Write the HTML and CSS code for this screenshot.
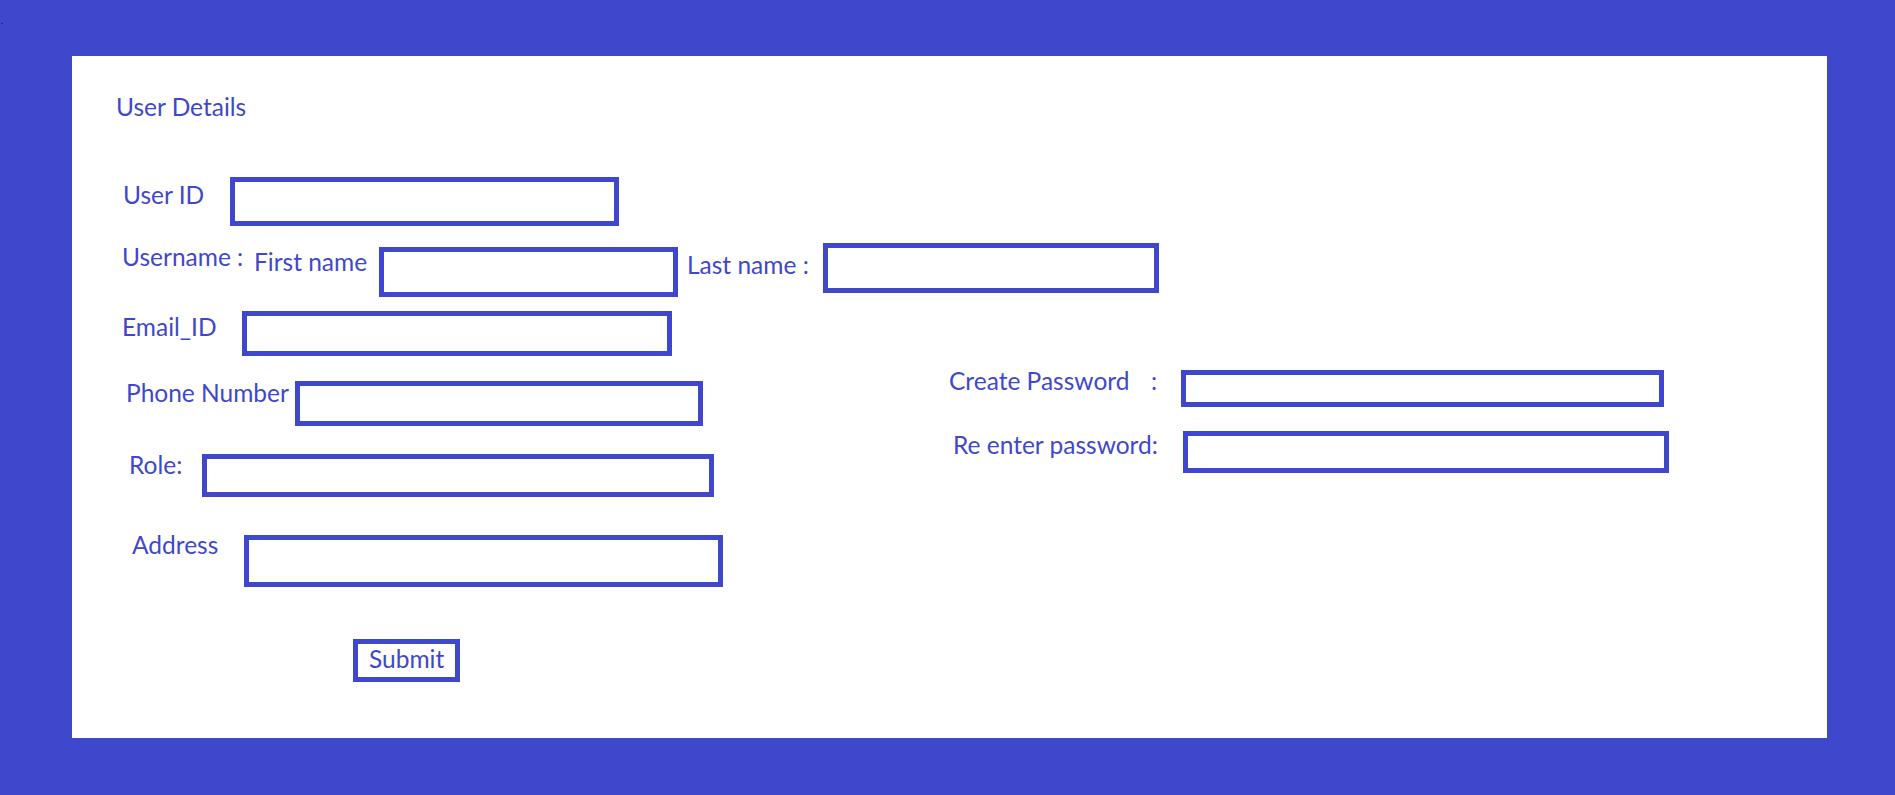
FILE: index.html
```html
<!DOCTYPE html>
<html lang="en">
<head>
<meta charset="utf-8">
<title>User Details</title>
<link rel="stylesheet" href="styles.css">
</head>
<body>
<span class="speck">.</span>
<main class="panel">
  <h1 class="title">User Details</h1>
  <form class="form-body">
    <div class="col-left">
      <div class="row row-userid">
        <label class="lbl lbl-userid">User ID</label>
        <input class="field f-userid" type="text">
      </div>
      <div class="row row-username">
        <span class="lbl lbl-username">Username :</span>
        <label class="lbl lbl-first">First name</label>
        <input class="field f-first" type="text">
        <label class="lbl lbl-last">Last name :</label>
        <input class="field f-last" type="text">
      </div>
      <div class="row row-email">
        <label class="lbl lbl-email">Email_ID</label>
        <input class="field f-email" type="text">
      </div>
      <div class="row row-phone">
        <label class="lbl lbl-phone">Phone Number</label>
        <input class="field f-phone" type="text">
      </div>
      <div class="row row-role">
        <label class="lbl lbl-role">Role:</label>
        <input class="field f-role" type="text">
      </div>
      <div class="row row-address">
        <label class="lbl lbl-address">Address</label>
        <input class="field f-address" type="text">
      </div>
      <div class="row row-submit">
        <button class="submit" type="button">Submit</button>
      </div>
    </div>
    <div class="col-right">
      <div class="row row-create">
        <label class="lbl lbl-create"><span>Create Password</span><span class="colon">:</span></label>
        <input class="field f-create" type="password">
      </div>
      <div class="row row-reenter">
        <label class="lbl lbl-reenter">Re enter password:</label>
        <input class="field f-reenter" type="password">
      </div>
    </div>
  </form>
</main>
</body>
</html>
```

FILE: styles.css
```css
* { box-sizing: border-box; }

html, body {
  margin: 0;
  height: 100%;
}

body {
  background: #3f48cc;
  padding: 56px 0 0 72px;
  font-family: Lato, "Open Sans", sans-serif;
  color: #3f48cc;
  position: relative;
}

.speck {
  position: absolute;
  left: 1px;
  top: 14px;
  font-size: 10px;
  line-height: 12px;
  color: #111;
}

.panel {
  width: 1755px;
  height: 682px;
  background: #ffffff;
  padding: 36px 0 0 44px;
}

.title {
  margin: 0;
  font-size: 24.5px;
  font-weight: 400;
  line-height: 30px;
  height: 30px;
}

.form-body {
  display: flex;
  margin: 55px 0 0 0;
}

.col-left {
  flex: none;
  width: 833px;
  display: flex;
  flex-direction: column;
}

.col-right {
  flex: none;
  display: flex;
  flex-direction: column;
  padding-top: 187px;
}

.row {
  display: flex;
  align-items: flex-start;
}

.lbl {
  flex: none;
  font-size: 24.5px;
  line-height: 30px;
  padding-top: 2px;
  white-space: nowrap;
}

.field {
  flex: none;
  display: block;
  border: 5px solid #3f48cc;
  background: #fff;
  outline: none;
  padding: 0 8px;
  margin: 0;
  font-family: Lato, sans-serif;
  font-size: 20px;
  color: #3f48cc;
}

/* Row 1: User ID */
.lbl-userid { margin: 1px 0 0 7px; width: 107px; }
.f-userid { width: 389px; height: 49px; }

/* Row 2: Username */
.row-username { margin-top: 14px; }
.lbl-username { margin-left: 6px; width: 132px; }
.lbl-first { margin-top: 5px; width: 125px; }
.f-first { margin-top: 7px; width: 299px; height: 50px; }
.lbl-last { margin: 8px 0 0 9px; width: 136px; }
.f-last { margin-top: 3px; width: 336px; height: 50px; }

/* Row 3: Email */
.row-email { margin-top: 13px; }
.lbl-email { margin-left: 6px; width: 120px; }
.f-email { margin-top: 1px; width: 430px; height: 45px; }

/* Row 4: Phone */
.row-phone { margin-top: 20px; }
.lbl-phone { margin-left: 10px; width: 169px; }
.f-phone { margin-top: 5px; width: 408px; height: 45px; }

/* Row 5: Role */
.row-role { margin-top: 22px; }
.lbl-role { margin-left: 13px; width: 73px; }
.f-role { margin-top: 6px; width: 512px; height: 43px; }

/* Row 6: Address */
.row-address { margin-top: 31px; }
.lbl-address { margin-left: 16px; width: 112px; }
.f-address { margin-top: 7px; width: 479px; height: 52px; }

/* Row 7: Submit */
.row-submit { margin-top: 52px; }
.submit {
  margin-left: 237px;
  width: 107px;
  height: 43px;
  border: 5px solid #3f48cc;
  background: #fff;
  color: #3f48cc;
  font-family: Lato, sans-serif;
  font-size: 24.5px;
  line-height: 30px;
  padding: 0 0 3px 11px;
  text-align: left;
  cursor: pointer;
}

/* Right column */
.lbl-create {
  display: flex;
  width: 232px;
}
.lbl-create .colon {
  margin-left: auto;
  margin-right: 24px;
}
.f-create { margin-top: 6px; width: 483px; height: 37px; }

.row-reenter { margin-top: 21px; }
.lbl-reenter { margin-left: 4px; width: 230px; }
.f-reenter { margin-top: 3px; width: 486px; height: 42px; }
```
